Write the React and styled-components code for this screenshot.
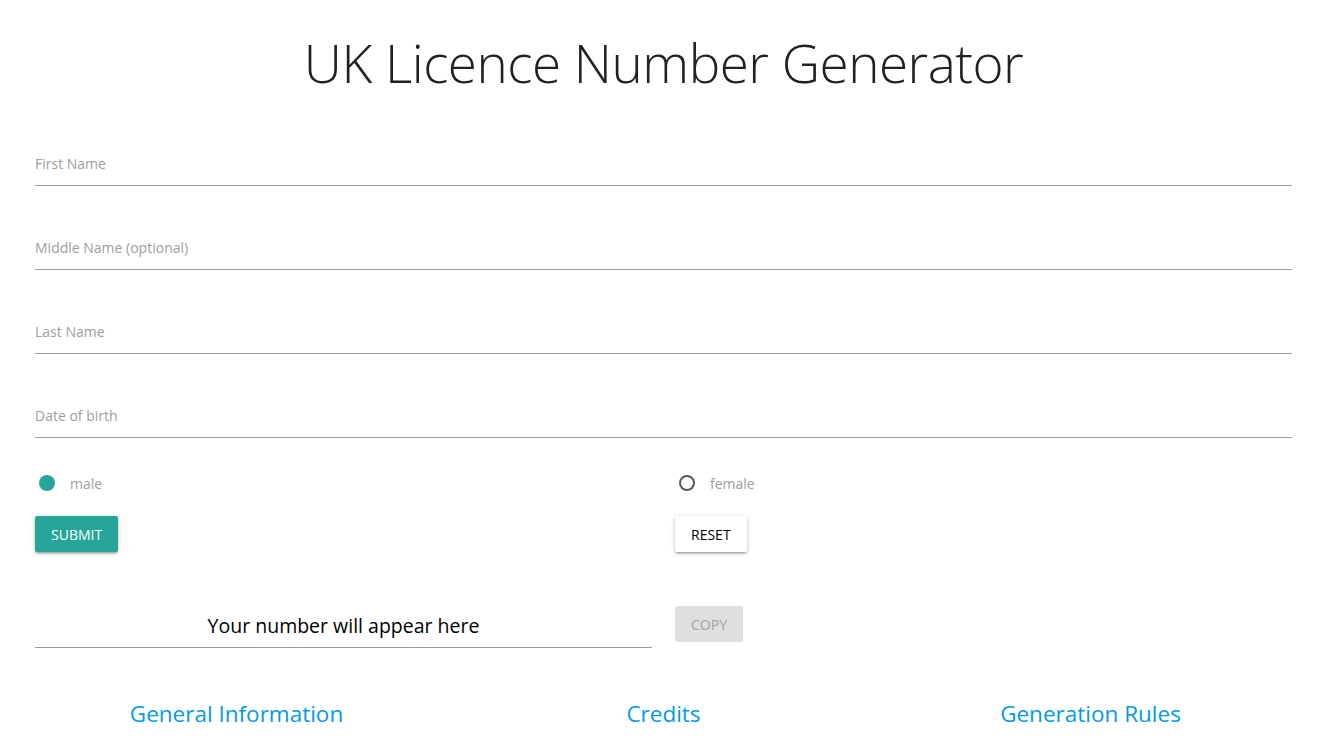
import React, { useState } from "react";
import styled, { createGlobalStyle } from "styled-components";

const Global = createGlobalStyle`
  html, body { margin: 0; padding: 0; background: #fff; }
  body { font-family: "Open Sans", "Noto Sans", sans-serif; color: rgba(0,0,0,0.87); }
  * { box-sizing: border-box; }
`;

const Page = styled.div`
  padding: 0 31px 0 35px;
`;

const Title = styled.h1`
  margin: 30px 0 44px;
  font-weight: 300;
  font-size: 53px;
  line-height: 66px;
  text-align: center;
  color: #212121;
  letter-spacing: -0.5px;
`;

const Form = styled.form`
  display: flex;
  flex-direction: column;
`;

const Fields = styled.div`
  display: flex;
  flex-direction: column;
  gap: 38px;
`;

const Input = styled.input`
  display: block;
  width: 100%;
  height: 46px;
  border: none;
  border-bottom: 1px solid #9e9e9e;
  outline: none;
  padding: 2px 0 0;
  font-family: inherit;
  font-size: 14px;
  color: #212121;
  background: transparent;
  &::placeholder { color: #9e9e9e; }
`;

const Grid2 = styled.div`
  display: grid;
  grid-template-columns: 617px 1fr;
  column-gap: 23px;
  margin-top: ${(p) => p.$top || 0}px;
  align-items: ${(p) => p.$align || "start"};
`;

const RadioLabel = styled.label`
  display: flex;
  align-items: center;
  height: 24px;
  cursor: pointer;
  font-size: 14px;
  color: #9e9e9e;
`;

const RadioDot = styled.span`
  width: 16px;
  height: 16px;
  margin: 0 15px 0 4px;
  border-radius: 50%;
  box-sizing: border-box;
  background: ${(p) => (p.$on ? "#26a69a" : "transparent")};
  border: ${(p) => (p.$on ? "none" : "2px solid #5a5a5a")};
`;

const Button = styled.button`
  height: 36px;
  padding: 0 16px;
  border: none;
  border-radius: 2px;
  font-family: inherit;
  font-size: 14px;
  text-transform: uppercase;
  letter-spacing: 0;
  cursor: pointer;
  justify-self: start;
  margin-top: ${(p) => p.$shift || 0}px;
  background: ${(p) => (p.$variant === "primary" ? "#26a69a" : p.$variant === "disabled" ? "#dfdfdf" : "#fff")};
  color: ${(p) => (p.$variant === "primary" ? "#fff" : p.$variant === "disabled" ? "#9f9f9f" : "#000")};
  box-shadow: ${(p) =>
    p.$variant === "disabled"
      ? "none"
      : "0 2px 2px 0 rgba(0,0,0,.14), 0 3px 1px -2px rgba(0,0,0,.12), 0 1px 5px 0 rgba(0,0,0,.2)"};
`;

const Output = styled.div`
  height: 42px;
  border-bottom: 1px solid #9e9e9e;
  display: flex;
  align-items: center;
  justify-content: center;
  font-size: 19.5px;
  color: #000;
  padding-bottom: 2px;
`;

const Links = styled.nav`
  display: grid;
  grid-template-columns: repeat(3, 1fr);
  column-gap: 24px;
  margin-top: 50px;
`;

const Link = styled.a`
  text-align: center;
  font-size: 22.5px;
  line-height: 32px;
  color: #039be5;
  text-decoration: none;
  font-weight: 400;
`;

export default function App() {
  const [gender, setGender] = useState("male");
  return (
    <Page>
      <Global />
      <Title>UK Licence Number Generator</Title>
      <Form onSubmit={(e) => e.preventDefault()}>
        <Fields>
          <Input placeholder="First Name" />
          <Input placeholder="Middle Name (optional)" />
          <Input placeholder="Last Name" />
          <Input placeholder="Date of birth" />
        </Fields>
        <Grid2 $top={33}>
          <RadioLabel onClick={() => setGender("male")}>
            <RadioDot $on={gender === "male"} />
            male
          </RadioLabel>
          <RadioLabel onClick={() => setGender("female")}>
            <RadioDot $on={gender === "female"} />
            female
          </RadioLabel>
        </Grid2>
        <Grid2 $top={21}>
          <Button $variant="primary" type="submit">Submit</Button>
          <Button type="button">Reset</Button>
        </Grid2>
        <Grid2 $top={54} $align="center">
          <Output>Your number will appear here</Output>
          <Button $variant="disabled" type="button" $shift={-6}>Copy</Button>
        </Grid2>
      </Form>
      <Links>
        <Link href="#">General Information</Link>
        <Link href="#">Credits</Link>
        <Link href="#">Generation Rules</Link>
      </Links>
    </Page>
  );
}
